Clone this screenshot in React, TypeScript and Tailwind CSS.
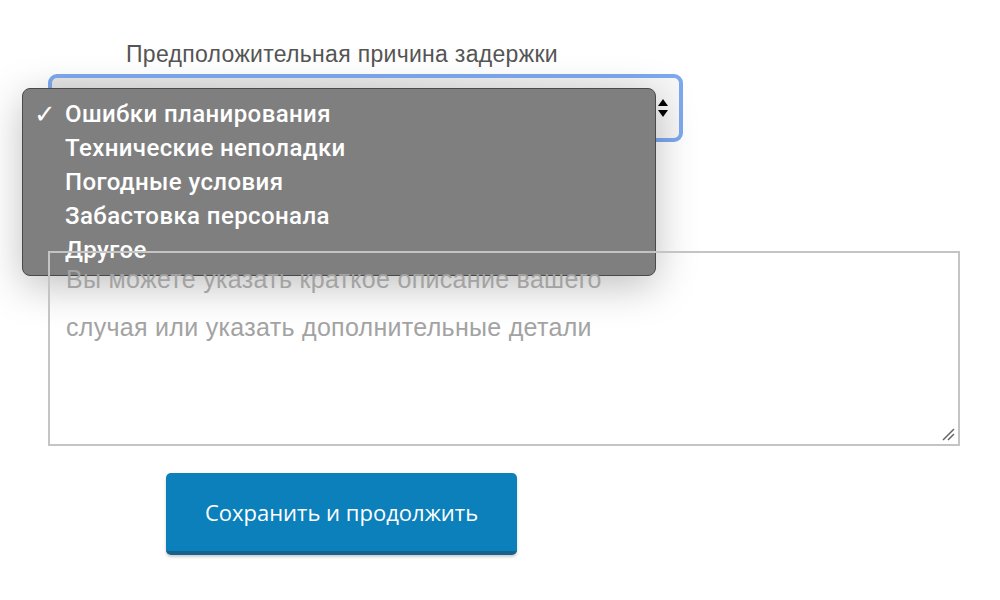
const reasons = [
  "Ошибки планирования",
  "Технические неполадки",
  "Погодные условия",
  "Забастовка персонала",
  "Другое",
];

function SelectArrows() {
  return (
    <svg width="12" height="22" viewBox="0 0 12 22" className="text-black">
      <path d="M6 2 L11 9 H1 Z" fill="currentColor" />
      <path d="M6 20 L11 13 H1 Z" fill="currentColor" />
    </svg>
  );
}

export default function App() {
  return (
    <div className="min-h-[600px] w-[1000px] bg-white font-['Liberation_Sans',sans-serif]">
      <div className="pl-[48px] pr-[40px] pt-[40px]">
        <div className="pl-[78px] text-[23px] leading-[28px] tracking-[0.3px] text-[#555]">
          Предположительная причина задержки
        </div>

        <div className="relative mt-[6px] w-[635px]">
          <div className="h-[68px] rounded-[9px] border-[4px] border-[#7ea9ef] bg-gradient-to-r from-[#e6e6e6] via-[#e9e9e9] to-[#f7f7f7] flex items-center justify-end pr-[10px]">
            <SelectArrows />
          </div>

          <ul className="absolute left-[-26px] top-[14px] w-[634px] rounded-[8px] border border-[#4a4a4a] bg-[#7f7f7f] py-[8px] text-white shadow-[0_10px_40px_rgba(0,0,0,0.25)] font-['Roboto',sans-serif] font-medium text-[24px] tracking-[0.4px]">
            {reasons.map((r, i) => (
              <li key={r} className="flex h-[34px] items-center">
                <span className="w-[42px] pl-[11px] font-['DejaVu_Sans',sans-serif] font-normal text-[26px] leading-[34px]">
                  {i === 0 ? "✓" : ""}
                </span>
                <span>{r}</span>
              </li>
            ))}
          </ul>
        </div>

        <div className="mt-[109px] h-[195px] w-[912px] border-2 border-[#c4c4c4] relative">
          <p className="w-[580px] pl-[16px] pt-[2px] text-[25px] leading-[48px] tracking-[0.3px] text-[#a3a3a3]">
            Вы можете указать краткое описание вашего случая или указать дополнительные детали
          </p>
          <svg className="absolute right-[3px] bottom-[3px]" width="14" height="14" viewBox="0 0 14 14">
            <path d="M2 13 L13 2 M7 13 L13 7" stroke="#666" strokeWidth="1.5" />
          </svg>
        </div>

        <div className="pl-[118px] pt-[27px]">
          <button className="h-[82px] w-[351px] rounded-[5px] bg-[#0b80bb] border-b-[4px] border-[#17638e] shadow-[0_2px_3px_rgba(0,0,0,0.2)] text-[22px] text-white font-['Open_Sans',sans-serif]">
            Сохранить и продолжить
          </button>
        </div>
      </div>
    </div>
  );
}
